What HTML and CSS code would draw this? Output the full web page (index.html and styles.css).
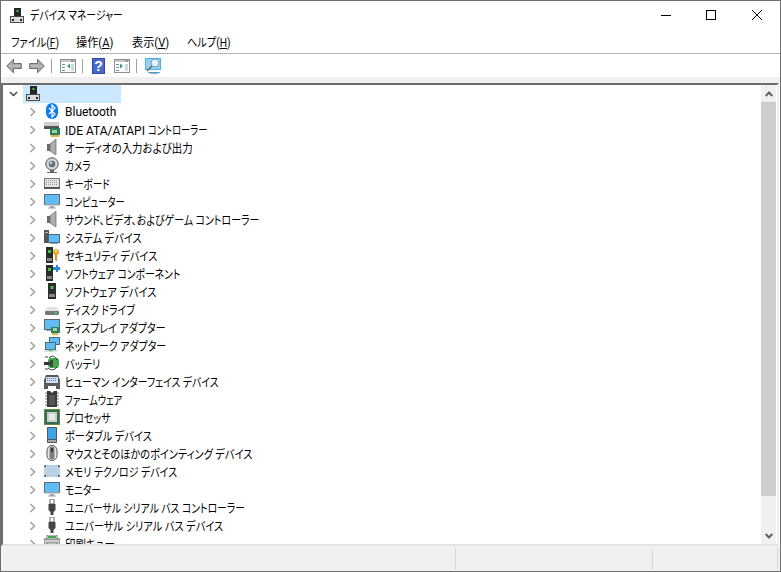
FILE: index.html
```html
<!DOCTYPE html>
<html lang="ja">
<head>
<meta charset="utf-8">
<title>デバイス マネージャー</title>
<link rel="stylesheet" href="styles.css">
</head>
<body>
<svg class="defs" width="0" height="0">
  <symbol id="device" viewBox="0 0 16 16">
    <rect x="5" y="0" width="7" height="8" fill="#262626"/><rect x="7.500" y="2" width="2" height="2" fill="#3fc24a"/>
    <rect x="1.500" y="8.500" width="13" height="6" fill="#dcdcdc" stroke="#4a4a4a"/><rect x="3" y="11" width="2" height="2" fill="#222"/><rect x="11" y="11" width="2" height="2" fill="#222"/>
  </symbol>
  <symbol id="chev" viewBox="0 0 8 10"><path d="M1.500 1l4 4-4 4" fill="none" stroke="#a6a6a6" stroke-width="1.700"/></symbol>
  <symbol id="bt" viewBox="0 0 16 16"><rect x="2" y="0" width="12" height="16" rx="6" fill="#0a7cf0"/><path d="M5 5l6 6-3 3V2l3 3-6 6" fill="none" stroke="#fff" stroke-width="1.200"/></symbol>
  <symbol id="ide" viewBox="0 0 16 16"><rect x="0" y="1" width="15" height="7" rx="1" fill="#cfcfcf"/><rect x="0" y="5" width="15" height="3" fill="#555"/><rect x="6" y="7" width="10" height="7" fill="#2f7f5c"/><rect x="8" y="9" width="5" height="3" fill="#9bd3a5"/><rect x="7" y="14" width="8" height="2" fill="#e0b040"/></symbol>
  <symbol id="spk" viewBox="0 0 16 16"><path d="M3 5h3v7H3z" fill="#6a6a6a"/><path d="M6 5l6-5v16l-6-4z" fill="#adadad" stroke="#666" stroke-width=".7"/></symbol>
  <symbol id="cam" viewBox="0 0 16 16"><circle cx="8" cy="7" r="6.200" fill="#d6d6d6" stroke="#555"/><circle cx="8" cy="7" r="3.200" fill="#5f6f7f"/><circle cx="7" cy="6" r="1.200" fill="#cfe2f2"/><path d="M3 15h10v1H3zM6 13h4v2H6z" fill="#666"/></symbol>
  <symbol id="kbd" viewBox="0 0 16 16"><rect x=".5" y="3.500" width="15" height="9" fill="#e4e4e4" stroke="#777"/><path d="M2 5.500h12M2 7.500h12M2 9.500h12" stroke="#999" stroke-dasharray="1 1"/><rect x="0" y="12" width="16" height="2" fill="#555"/></symbol>
  <symbol id="mon" viewBox="0 0 16 16"><rect x=".5" y="1.500" width="15" height="10" fill="#5fbdf3" stroke="#5a6a78"/><rect x="1" y="11.500" width="14" height="1.500" fill="#cfd6dc"/><path d="M6 13h4v1.500H6zM4 14.500h8v1H4z" fill="#9aa4ad"/></symbol>
  <symbol id="sys" viewBox="0 0 16 16"><rect x="0" y="1" width="5" height="13" fill="#555"/><rect x="1" y="3" width="3" height="1" fill="#bbb"/><rect x="4.500" y="5.500" width="11" height="8" fill="#5fbdf3" stroke="#4a6a80"/><rect x="6" y="14" width="8" height="1" fill="#9aa4ad"/></symbol>
  <symbol id="sec" viewBox="0 0 16 16"><rect x="2" y="0" width="7" height="16" fill="#2b2b2b"/><rect x="4" y="3" width="3" height="3" fill="#3fc24a"/><rect x="3" y="11" width="5" height="3" fill="#888"/><circle cx="12" cy="5" r="3" fill="#e8a92c"/><circle cx="12" cy="4" r="1" fill="#fff"/><path d="M11 7h2v7h-1l-1-1z" fill="#d8951e"/></symbol>
  <symbol id="swc" viewBox="0 0 16 16"><rect x="2" y="0" width="7" height="16" fill="#2b2b2b"/><rect x="4" y="3" width="3" height="3" fill="#3fc24a"/><rect x="3" y="11" width="5" height="3" fill="#888"/><path d="M9 2h3V0h2v2h2v3h-2v2h-2V5H9z" fill="#2f86d8"/></symbol>
  <symbol id="swd" viewBox="0 0 16 16"><rect x="4" y="0" width="8" height="16" fill="#2b2b2b"/><rect x="6.500" y="3" width="3" height="3" fill="#3fc24a"/><rect x="5" y="11" width="6" height="3" fill="#888"/></symbol>
  <symbol id="disk" viewBox="0 0 16 16"><path d="M3 6h10l2 4H1z" fill="#e2e2e2"/><rect x="1" y="10" width="14" height="4" rx="1" fill="#777"/><rect x="11" y="11" width="2" height="2" fill="#50d060"/></symbol>
  <symbol id="disp" viewBox="0 0 16 16"><rect x=".5" y=".5" width="15" height="10" fill="#5fbdf3" stroke="#5a6a78"/><rect x="2" y="11" width="8" height="1" fill="#9aa4ad"/><rect x="7" y="8" width="9" height="6" fill="#2f7f5c"/><rect x="9" y="9" width="4" height="3" fill="#9bd3a5"/><rect x="8" y="14" width="6" height="2" fill="#e0b040"/></symbol>
  <symbol id="net" viewBox="0 0 16 16"><rect x="5.500" y=".5" width="10" height="7" fill="#5fbdf3" stroke="#4a6a80"/><rect x="1.500" y="5.500" width="10" height="7" fill="#5fbdf3" stroke="#4a6a80"/><path d="M0 13h13v2H0z" fill="#d8dde0"/><rect x="5" y="12" width="3" height="2" fill="#40a850"/></symbol>
  <symbol id="bat" viewBox="0 0 16 16"><rect x="4" y="3" width="11" height="10" rx="3" fill="#3fa84a"/><path d="M5 3c2-3 7-2 8 2M4 13c3 3 7 2 9-1" fill="none" stroke="#333"/><rect x="0" y="7" width="7" height="3" fill="#333"/><rect x="6" y="5" width="3" height="7" fill="#444"/><path d="M1 2h3M1 14h3" stroke="#444"/></symbol>
  <symbol id="hid" viewBox="0 0 16 16"><path d="M0 16V7l2-5h12l2 5v9h-4v-3H4v3z" fill="#5a5a5a"/><rect x="2" y="4" width="12" height="6" fill="#cfe0ef"/><path d="M3 5.500h10M3 7.500h10" stroke="#5a7fb0" stroke-dasharray="1 1"/></symbol>
  <symbol id="fw" viewBox="0 0 16 16"><path d="M3 0h3l2 2 2-2h3v16H3z" fill="#3a3a3a"/><path d="M1 2h2M1 5h2M1 8h2M1 11h2M1 14h2M13 2h2M13 5h2M13 8h2M13 11h2M13 14h2" stroke="#777"/><rect x="5" y="4" width="6" height="10" fill="#555"/></symbol>
  <symbol id="cpu" viewBox="0 0 16 16"><rect x="0" y="0" width="16" height="16" fill="#2f6f50"/><rect x=".5" y=".5" width="15" height="15" fill="none" stroke="#b59a30" stroke-dasharray="1 1"/><rect x="3" y="3" width="10" height="10" fill="#ccc"/><rect x="5" y="5" width="6" height="6" fill="#e8e8e8"/></symbol>
  <symbol id="port" viewBox="0 0 16 16"><rect x="3" y="0" width="10" height="16" rx="1" fill="#555"/><rect x="4" y="1" width="8" height="11" fill="#3fa4ec"/><rect x="4" y="13" width="8" height="2" fill="#aaa"/></symbol>
  <symbol id="mouse" viewBox="0 0 16 16"><rect x="3" y=".5" width="10" height="15" rx="5" fill="#e8e8e8" stroke="#555"/><rect x="5.500" y="1.500" width="5" height="13" rx="2.500" fill="#7a8088"/><rect x="7" y="3" width="2" height="4" fill="#333"/></symbol>
  <symbol id="mem" viewBox="0 0 16 16"><rect x="0" y="2" width="16" height="12" rx="2" fill="#444"/><rect x="2" y="2" width="12" height="12" fill="#bcd2e4"/><rect x="0" y="4" width="16" height="8" fill="#bcd2e4"/></symbol>
  <symbol id="usb" viewBox="0 0 16 16"><rect x="6" y="0" width="4" height="5" fill="#fff" stroke="#666"/><path d="M4.500 5h7v6l-2 2v3h-3v-3l-2-2z" fill="#444"/></symbol>
  <symbol id="print" viewBox="0 0 16 16"><rect x="3" y="0" width="10" height="5" fill="#fff" stroke="#777"/><rect x="4" y="1" width="8" height="2" fill="#3fa84a"/><rect x="0" y="4" width="16" height="8" fill="#ccc" stroke="#666"/><rect x="3" y="8" width="10" height="6" fill="#fff" stroke="#777"/></symbol>
  <symbol id="back" viewBox="0 0 16 16"><path d="M.7 8L7.500 1.200v4.300h7.800v5H7.500v4.300z" fill="#a9a9a9" stroke="#6c6c6c"/><path d="M3 8h11" stroke="#c8c8c8"/></symbol>
  <symbol id="win" viewBox="0 0 16 14"><rect x=".5" y=".5" width="15" height="13" fill="#fff" stroke="#8a8f94"/><rect x="1" y="1" width="14" height="2" fill="#c4c9cd"/><rect x="11" y="1.500" width="3" height="1" fill="#606a72"/><rect x="2" y="5" width="3" height="1" fill="#6f93ad"/><rect x="2" y="8" width="3" height="1" fill="#6f93ad"/><rect x="2" y="11" width="3" height="1" fill="#6f93ad"/><rect x="11" y="5" width="3" height="7" fill="#cfdae2"/></symbol>
  <symbol id="scan" viewBox="0 0 16 16"><rect x="0" y="0" width="16" height="12" fill="#4fb0ea"/><rect x="1" y="1" width="14" height="10" fill="#8fd2f6"/><circle cx="10" cy="5" r="4" fill="#e2f4ff" stroke="#8a9aa6"/><path d="M7 8l-5 5" stroke="#666" stroke-width="1.500"/><path d="M3 14.500h12" stroke="#4fa0d0"/><path d="M5 15.500h8" stroke="#a0a8b0"/></symbol>
</svg>

<div class="window">
  <header class="titlebar">
    <svg class="title-icon"><use href="#device"/></svg>
    <span class="title-text jp s82">デバイス マネージャー</span>
    <div class="caption">
      <svg class="cap-btn" viewBox="0 0 46 29"><path d="M19 14.500h10" stroke="#000"/></svg>
      <svg class="cap-btn" viewBox="0 0 46 29"><rect x="18.500" y="9.500" width="9" height="9" fill="none" stroke="#000"/></svg>
      <svg class="cap-btn" viewBox="0 0 46 29"><path d="M18 9l10 10M28 9L18 19" stroke="#000"/></svg>
    </div>
  </header>
  <nav class="menubar">
    <span class="menu"><span class="jp s85">ファイル(<u>F</u>)</span></span>
    <span class="menu"><span class="jp s93">操作(<u>A</u>)</span></span>
    <span class="menu"><span class="jp s93">表示(<u>V</u>)</span></span>
    <span class="menu"><span class="jp s85">ヘルプ(<u>H</u>)</span></span>
  </nav>
  <div class="toolbar">
    <svg class="tool arrow-tool first"><use href="#back"/></svg>
    <svg class="tool arrow-tool flip"><use href="#back"/></svg>
    <i class="tsep"></i>
    <svg class="tool"><use href="#win"/><path d="M10 4.500v5L7 7z" fill="#2fa84a"/></svg>
    <i class="tsep"></i>
    <svg class="tool help" viewBox="0 0 13 16"><rect width="13" height="16" fill="#2b49a8"/><rect x="1" y="1" width="11" height="14" fill="#4a6cc8"/><text x="6.500" y="13" text-anchor="middle" class="helpq">?</text></svg>
    <svg class="tool"><use href="#win"/><path d="M6 4.500l3 2.500-3 2.500z" fill="#2fa84a"/></svg>
    <i class="tsep"></i>
    <svg class="tool tall"><use href="#scan"/></svg>
  </div>
  <div class="band"></div>
  <main class="content">
    <div class="tree">
      <div class="root">
        <svg class="root-chev" viewBox="0 0 10 6"><path d="M1 .7l4 4 4-4" fill="none" stroke="#404040" stroke-width="1.500"/></svg>
        <span class="root-sel"><svg class="icon"><use href="#device"/></svg></span>
      </div>
      <div class="row"><svg class="chev"><use href="#chev"/></svg><svg class="icon"><use href="#bt"/></svg><span class="latin">Bluetooth</span></div>
      <div class="row"><svg class="chev"><use href="#chev"/></svg><svg class="icon"><use href="#ide"/></svg><span>IDE ATA/ATAPI <span class="jp s77">コントローラー</span></span></div>
      <div class="row"><svg class="chev"><use href="#chev"/></svg><svg class="icon"><use href="#spk"/></svg><span class="jp s87">オーディオの入力および出力</span></div>
      <div class="row"><svg class="chev"><use href="#chev"/></svg><svg class="icon"><use href="#cam"/></svg><span class="jp s80">カメラ</span></div>
      <div class="row"><svg class="chev"><use href="#chev"/></svg><svg class="icon"><use href="#kbd"/></svg><span class="jp s80">キーボード</span></div>
      <div class="row"><svg class="chev"><use href="#chev"/></svg><svg class="icon"><use href="#mon"/></svg><span class="jp s77">コンピューター</span></div>
      <div class="row"><svg class="chev"><use href="#chev"/></svg><svg class="icon"><use href="#spk"/></svg><span class="jp s83">サウンド、ビデオ、およびゲーム コントローラー</span></div>
      <div class="row"><svg class="chev"><use href="#chev"/></svg><svg class="icon"><use href="#sys"/></svg><span class="jp s85">システム デバイス</span></div>
      <div class="row"><svg class="chev"><use href="#chev"/></svg><svg class="icon"><use href="#sec"/></svg><span class="jp s85">セキュリティ デバイス</span></div>
      <div class="row"><svg class="chev"><use href="#chev"/></svg><svg class="icon"><use href="#swc"/></svg><span class="jp s82">ソフトウェア コンポーネント</span></div>
      <div class="row"><svg class="chev"><use href="#chev"/></svg><svg class="icon"><use href="#swd"/></svg><span class="jp s85">ソフトウェア デバイス</span></div>
      <div class="row"><svg class="chev"><use href="#chev"/></svg><svg class="icon"><use href="#disk"/></svg><span class="jp s82">ディスク ドライブ</span></div>
      <div class="row"><svg class="chev"><use href="#chev"/></svg><svg class="icon"><use href="#disp"/></svg><span class="jp s83">ディスプレイ アダプター</span></div>
      <div class="row"><svg class="chev"><use href="#chev"/></svg><svg class="icon"><use href="#net"/></svg><span class="jp s83">ネットワーク アダプター</span></div>
      <div class="row"><svg class="chev"><use href="#chev"/></svg><svg class="icon"><use href="#bat"/></svg><span class="jp s85">バッテリ</span></div>
      <div class="row"><svg class="chev"><use href="#chev"/></svg><svg class="icon"><use href="#hid"/></svg><span class="jp s82">ヒューマン インターフェイス デバイス</span></div>
      <div class="row"><svg class="chev"><use href="#chev"/></svg><svg class="icon"><use href="#fw"/></svg><span class="jp s77">ファームウェア</span></div>
      <div class="row"><svg class="chev"><use href="#chev"/></svg><svg class="icon"><use href="#cpu"/></svg><span class="jp s83">プロセッサ</span></div>
      <div class="row"><svg class="chev"><use href="#chev"/></svg><svg class="icon"><use href="#port"/></svg><span class="jp s85">ポータブル デバイス</span></div>
      <div class="row"><svg class="chev"><use href="#chev"/></svg><svg class="icon"><use href="#mouse"/></svg><span class="jp s85">マウスとそのほかのポインティング デバイス</span></div>
      <div class="row"><svg class="chev"><use href="#chev"/></svg><svg class="icon"><use href="#mem"/></svg><span class="jp s83">メモリ テクノロジ デバイス</span></div>
      <div class="row"><svg class="chev"><use href="#chev"/></svg><svg class="icon"><use href="#mon"/></svg><span class="jp s80">モニター</span></div>
      <div class="row"><svg class="chev"><use href="#chev"/></svg><svg class="icon"><use href="#usb"/></svg><span class="jp s82">ユニバーサル シリアル バス コントローラー</span></div>
      <div class="row"><svg class="chev"><use href="#chev"/></svg><svg class="icon"><use href="#usb"/></svg><span class="jp s85">ユニバーサル シリアル バス デバイス</span></div>
      <div class="row"><svg class="chev"><use href="#chev"/></svg><svg class="icon"><use href="#print"/></svg><span class="jp s87">印刷キュー</span></div>
    </div>
    <div class="scrollbar">
      <div class="arrow"><svg class="arrow-icon" viewBox="0 0 8 6"><path d="M.7 5l3.300-3.500L7.300 5" fill="none" stroke="#606060" stroke-width="2"/></svg></div>
      <div class="thumb"></div>
      <div class="arrow"><svg class="arrow-icon" viewBox="0 0 8 6"><path d="M.7 1l3.300 3.500L7.300 1" fill="none" stroke="#606060" stroke-width="2"/></svg></div>
    </div>
  </main>
  <footer class="statusbar">
    <div class="cell cell-a"></div>
    <div class="cell cell-b"></div>
    <div class="cell cell-c"></div>
  </footer>
</div>
</body>
</html>
```
FILE: styles.css
```css
* { box-sizing: border-box; }
html, body { margin: 0; padding: 0; height: 572px; overflow: hidden; background: #fff; }
body { font-family: Roboto, "Noto Sans CJK JP", sans-serif; font-size: 12px; color: #000; font-feature-settings: "palt"; }
.defs { position: absolute; }
.helpq { font: bold 14px "Liberation Sans", sans-serif; fill: #fff; }

/* Narrow kana: the reference font sets kana tighter than any installed face. */
.jp { display: inline-block; transform-origin: left center; white-space: nowrap; }
.s77 { transform: scaleX(.77); }
.s80 { transform: scaleX(.8); }
.s82 { transform: scaleX(.82); }
.s83 { transform: scaleX(.83); }
.s85 { transform: scaleX(.85); }
.s87 { transform: scaleX(.87); }
.s93 { transform: scaleX(.93); }

.window { width: 781px; height: 572px; display: flex; flex-direction: column; border: 1px solid #6f6f6f; background: #fff; }

.titlebar { height: 29px; display: flex; align-items: center; padding-left: 8px; flex: none; }
.title-icon { width: 16px; height: 16px; flex: none; }
.title-text { margin: 2px 0 0 5px; line-height: 29px; }
.caption { margin-left: auto; display: flex; }
.cap-btn { width: 46px; height: 29px; flex: none; }

.menubar { height: 23px; display: grid; grid-template-columns: 65px 56px 55px auto; padding-left: 10px; flex: none; }
.menu { line-height: 27px; white-space: nowrap; }
.menu u { text-underline-offset: 1px; }

.toolbar { height: 24px; border-top: 1px solid #b5b3bb; display: flex; align-items: center; padding-left: 5px; flex: none; }
.tool { width: 16px; height: 14px; margin-right: 6px; flex: none; }
.arrow-tool { height: 16px; }
.first { margin-right: 7px; }
.flip { transform: scaleX(-1); }
.tall { height: 16px; }
.help { width: 13px; height: 16px; margin: 0 9px 0 1px; }
.tsep { width: 1px; height: 14px; background: #a0a0a0; margin-right: 8px; flex: none; }

.band { height: 6px; background: #f0f0f0; flex: none; }

.content { height: 463px; display: flex; flex: none; border-top: 2px solid #6d6d6d; border-left: 2px solid #6d6d6d; border-right: 2px solid #f0f0f0; border-bottom: 2px solid #e4e4e4; margin-right: 1px; overflow: hidden; }
.tree { flex: 1; min-width: 0; overflow: hidden; }
.root, .row { height: 18px; display: flex; align-items: center; white-space: nowrap; }
.root-chev { width: 9px; height: 6px; margin-left: 6px; flex: none; }
.root-sel { width: 98px; height: 18px; margin-left: 5px; padding-left: 2px; background: #cce8ff; display: flex; align-items: center; }
.row { padding-left: 26px; }
.row > span { position: relative; top: -1px; }
.row > .latin { top: 0; }
.chev { width: 8px; height: 10px; flex: none; }
.icon { width: 16px; height: 16px; flex: none; }
.row .icon { margin-left: 7px; margin-right: 5px; position: relative; top: -1px; }

.scrollbar { width: 15px; flex: none; background: #f0f0f0; display: flex; flex-direction: column; margin-right: 1px; }
.arrow { height: 17px; flex: none; display: flex; align-items: center; justify-content: center; }
.arrow-icon { width: 8px; height: 6px; }
.thumb { height: 394px; background: #cdcdcd; flex: none; }
.scrollbar .arrow:last-child { margin-top: auto; }

.statusbar { flex: 1; display: flex; background: #f0f0f0; padding: 2px 1px 0 0; }
.cell { height: 21px; border-right: 1px solid #d6d6d6; flex: none; }
.cell-a { width: 455px; }
.cell-b { width: 197px; }
.cell-c { width: 125px; }
```
